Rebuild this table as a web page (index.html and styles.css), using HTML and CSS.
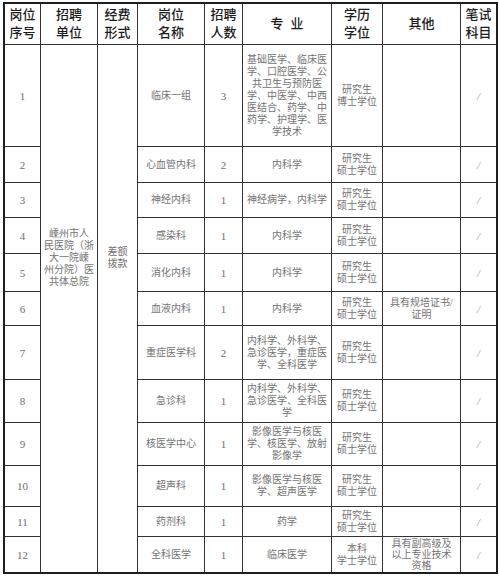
FILE: index.html
```html
<!DOCTYPE html>
<html lang="zh-CN">
<head>
<meta charset="utf-8">
<title>招聘岗位表</title>
<link rel="stylesheet" href="styles.css">
</head>
<body>
<div class="page">
<table class="jobs">
  <colgroup>
    <col class="c1"><col class="c2"><col class="c3"><col class="c4"><col class="c5"><col class="c6"><col class="c7"><col class="c8"><col class="c9">
  </colgroup>
  <thead>
    <tr class="h-head">
      <th>岗位<br>序号</th>
      <th>招聘<br>单位</th>
      <th>经费<br>形式</th>
      <th>岗位<br>名称</th>
      <th>招聘<br>人数</th>
      <th>专&nbsp;&nbsp;业</th>
      <th>学历<br>学位</th>
      <th>其他</th>
      <th class="last">笔试<br>科目</th>
    </tr>
  </thead>
  <tbody>
    <tr class="h-r1">
      <td class="num">1</td>
      <td class="merged" rowspan="12">嵊州市人<br>民医院（浙<br>大一院嵊<br>州分院）医<br>共体总院</td>
      <td class="merged" rowspan="12">差额<br>拨款</td>
      <td>临床一组</td>
      <td class="num">3</td>
      <td>基础医学、临床医<br>学、口腔医学、公<br>共卫生与预防医<br>学、中医学、中西<br>医结合、药学、中<br>药学、护理学、医<br>学技术</td>
      <td>研究生<br>博士学位</td>
      <td></td>
      <td class="slash last">/</td>
    </tr>
    <tr class="h-r2">
      <td class="num">2</td>
      <td>心血管内科</td>
      <td class="num">2</td>
      <td>内科学</td>
      <td>研究生<br>硕士学位</td>
      <td></td>
      <td class="slash last">/</td>
    </tr>
    <tr class="h-r3">
      <td class="num">3</td>
      <td>神经内科</td>
      <td class="num">1</td>
      <td>神经病学，内科学</td>
      <td>研究生<br>硕士学位</td>
      <td></td>
      <td class="slash last">/</td>
    </tr>
    <tr class="h-r4">
      <td class="num">4</td>
      <td>感染科</td>
      <td class="num">1</td>
      <td>内科学</td>
      <td>研究生<br>硕士学位</td>
      <td></td>
      <td class="slash last">/</td>
    </tr>
    <tr class="h-r5">
      <td class="num">5</td>
      <td>消化内科</td>
      <td class="num">1</td>
      <td>内科学</td>
      <td>研究生<br>硕士学位</td>
      <td></td>
      <td class="slash last">/</td>
    </tr>
    <tr class="h-r6">
      <td class="num">6</td>
      <td>血液内科</td>
      <td class="num">1</td>
      <td>内科学</td>
      <td>研究生<br>硕士学位</td>
      <td>具有规培证书/<br>证明</td>
      <td class="slash last">/</td>
    </tr>
    <tr class="h-r7">
      <td class="num">7</td>
      <td>重症医学科</td>
      <td class="num">2</td>
      <td>内科学、外科学、<br>急诊医学，重症医<br>学、全科医学</td>
      <td>研究生<br>硕士学位</td>
      <td></td>
      <td class="slash last">/</td>
    </tr>
    <tr class="h-r8">
      <td class="num">8</td>
      <td>急诊科</td>
      <td class="num">1</td>
      <td>内科学、外科学、<br>急诊医学、全科医<br>学</td>
      <td>研究生<br>硕士学位</td>
      <td></td>
      <td class="slash last">/</td>
    </tr>
    <tr class="h-r9">
      <td class="num">9</td>
      <td>核医学中心</td>
      <td class="num">1</td>
      <td>影像医学与核医<br>学、核医学、放射<br>影像学</td>
      <td>研究生<br>硕士学位</td>
      <td></td>
      <td class="slash last">/</td>
    </tr>
    <tr class="h-r10">
      <td class="num">10</td>
      <td>超声科</td>
      <td class="num">1</td>
      <td>影像医学与核医<br>学、超声医学</td>
      <td>研究生<br>硕士学位</td>
      <td></td>
      <td class="slash last">/</td>
    </tr>
    <tr class="h-r11">
      <td class="num">11</td>
      <td>药剂科</td>
      <td class="num">1</td>
      <td>药学</td>
      <td>研究生<br>硕士学位</td>
      <td></td>
      <td class="slash last">/</td>
    </tr>
    <tr class="h-r12 lastrow">
      <td class="num">12</td>
      <td>全科医学</td>
      <td class="num">1</td>
      <td>临床医学</td>
      <td>本科<br>学士学位</td>
      <td class="tight">具有副高级及<br>以上专业技术<br>资格</td>
      <td class="slash last">/</td>
    </tr>
  </tbody>
</table>
</div>
</body>
</html>
```
FILE: styles.css
```css
html, body {
  margin: 0;
  padding: 0;
  background: #ffffff;
}

.page {
  padding: 2px 0 0 3px;
}

.jobs {
  table-layout: fixed;
  border-collapse: separate;
  border-spacing: 0;
  width: 495px;
  border: 2px solid #1e1e1e;
}

.c1 { width: 36px; }
.c2 { width: 57px; }
.c3 { width: 40px; }
.c4 { width: 67px; }
.c5 { width: 38px; }
.c6 { width: 89px; }
.c7 { width: 51px; }
.c8 { width: 78px; }
.c9 { width: 35px; }

.jobs th,
.jobs td {
  box-sizing: border-box;
  padding: 0 1px;
  border-right: 1px solid #333333;
  border-bottom: 1px solid #333333;
  text-align: center;
  vertical-align: middle;
  overflow: hidden;
  white-space: nowrap;
}

.jobs th {
  font-family: "Liberation Sans", "Noto Sans CJK SC", sans-serif;
  font-size: 13px;
  line-height: 18px;
  font-weight: 500;
  color: #1c1c1c;
}

.jobs td {
  font-family: "Liberation Serif", "Noto Sans CJK SC", serif;
  font-size: 10px;
  line-height: 12px;
  font-weight: 400;
  color: #737373;
}

.jobs .last {
  border-right: none;
}

.jobs .lastrow td {
  border-bottom: none;
}

.jobs td.merged {
  border-bottom: none;
  padding-bottom: 102px;
}

.jobs td.num {
  font-size: 11px;
  color: #6e6e6e;
}

.jobs td.slash {
  font-size: 11px;
  font-style: italic;
  color: #9a9a9a;
}

.jobs td.tight {
  line-height: 11.3px;
}

.h-head { height: 41px; }
.h-r1 { height: 102px; }
.h-r2 { height: 36px; }
.h-r3 { height: 35px; }
.h-r4 { height: 36px; }
.h-r5 { height: 38px; }
.h-r6 { height: 34px; }
.h-r7 { height: 54px; }
.h-r8 { height: 43px; }
.h-r9 { height: 43px; }
.h-r10 { height: 41px; }
.h-r11 { height: 30px; }
.h-r12 { height: 35px; }
```
